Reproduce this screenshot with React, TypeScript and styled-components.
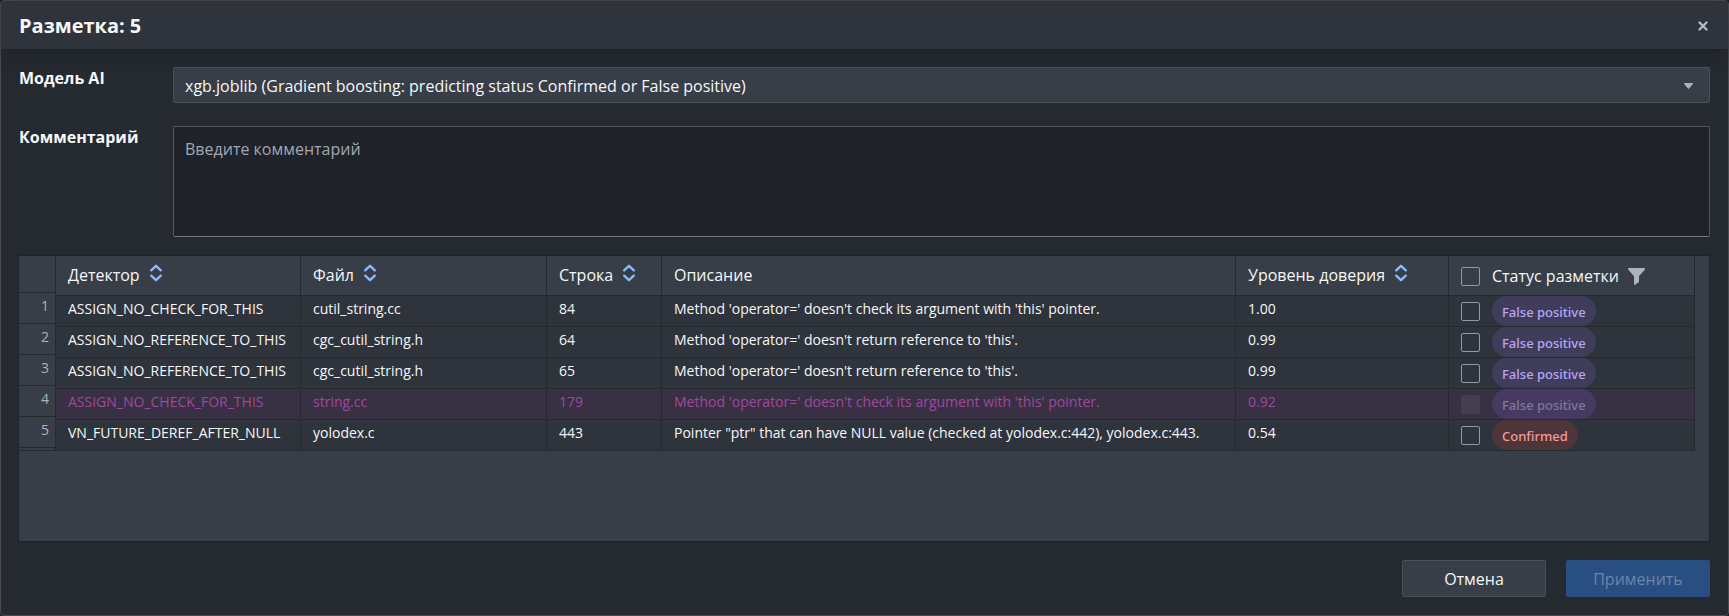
import React from "react";
import styled, { createGlobalStyle } from "styled-components";

const GlobalStyle = createGlobalStyle`
  *, *::before, *::after { box-sizing: border-box; }
  body {
    margin: 0;
    background: #1a1c22;
    color: #f6f7f9;
    font-family: "Open Sans", "Noto Sans", sans-serif;
    font-size: 16px;
    line-height: 20px;
  }
  button, select, textarea, input { font: inherit; color: inherit; margin: 0; }
`;

const Dialog = styled.main`
  display: flex;
  flex-direction: column;
  min-height: 100vh;
  background: #252a31;
  border: 1px solid #484b50;
  border-radius: 4px;
`;

const Header = styled.header`
  display: flex;
  align-items: center;
  justify-content: space-between;
  height: 48px;
  padding: 2px 17px 0 18px;
  background: #2f343c;
  border-radius: 4px 4px 0 0;
  box-shadow: 0 4px 16px rgba(17, 20, 24, 0.4);
`;

const Title = styled.h1`
  margin: 0;
  font-size: 20px;
  line-height: 24px;
  font-weight: 700;
`;

const CloseButton = styled.button`
  display: flex;
  padding: 0;
  border: 0;
  background: none;
  cursor: pointer;
`;

const Body = styled.form`
  flex: 1;
  display: flex;
  flex-direction: column;
  padding: 18px 18px 18px 17px;
`;

const Fields = styled.div`
  display: flex;
  flex-direction: column;
  gap: 23px;
  margin-bottom: 18px;
`;

const Field = styled.div`
  display: flex;
`;

const Label = styled.label`
  width: 155px;
  flex: none;
  padding: 1px 0 0 1px;
  font-weight: 700;
`;

const Control = styled.div`
  position: relative;
  flex: 1;
  display: flex;
`;

const Select = styled.select`
  width: 100%;
  height: 36px;
  padding: 2px 36px 0 11px;
  appearance: none;
  background: #383e47;
  border: 1px solid #4b5059;
  border-radius: 2px;
`;

const Caret = styled.svg`
  position: absolute;
  right: 17px;
  top: 16px;
  pointer-events: none;
`;

const TextArea = styled.textarea`
  width: 100%;
  height: 111px;
  padding: 12px 11px;
  resize: none;
  background: #1f2229;
  border: 1px solid #54565b;
  border-bottom-color: #76787c;
  border-radius: 2px;
  &::placeholder { color: #a2a8b3; opacity: 1; }
`;

const Panel = styled.div`
  flex: 1;
  display: flex;
  align-items: flex-start;
  min-height: 287px;
  padding-right: 14px;
  background: #383e47;
  border: 1px solid #1f2329;
`;

const Numbers = styled.ol`
  flex: none;
  width: 37px;
  height: 195px;
  margin: 0;
  padding: 36px 0 0;
  list-style: none;
  border: solid #252a31;
  border-width: 0 1px 1px 0;
`;

const NumberItem = styled.li`
  height: 31px;
  padding: 3px 6px 0 0;
  border-top: 1px solid #252a31;
  text-align: right;
  font-size: 14px;
  color: #abb3bf;
  &:last-child { height: 32px; border-bottom: 1px solid #252a31; }
`;

const Table = styled.table`
  flex: 1;
  table-layout: fixed;
  border-collapse: separate;
  border-spacing: 0;
`;

const Col = styled.col<{ $w?: number }>`
  width: ${(p) => (p.$w ? `${p.$w}px` : "auto")};
`;

const Th = styled.th`
  height: 40px;
  padding: 0 12px 2px;
  text-align: left;
  font-weight: 400;
  border: solid #252a31;
  border-width: 0 1px 1px 0;
`;

const StatusTh = styled(Th)`
  padding: 1px 12px 0;
`;

const Head = styled.div`
  display: flex;
  align-items: center;
  gap: 9px;
`;

const HeadLabel = styled.label`
  display: flex;
  align-items: center;
  gap: 12px;
`;

const SortButton = styled.button`
  display: flex;
  padding: 0 0 4px;
  border: 0;
  background: none;
  cursor: pointer;
`;

const Row = styled.tr<{ $muted?: boolean }>`
  background: ${(p) => (p.$muted ? "#383043" : "#2f343c")};
  color: ${(p) => (p.$muted ? "#a0489f" : "#f6f7f9")};
`;

const Td = styled.td`
  height: 31px;
  padding: 0 12px 5px;
  font-size: 14px;
  white-space: nowrap;
  overflow: hidden;
  border: solid #252a31;
  border-width: 0 1px 1px 0;
`;

const StatusTd = styled(Td)`
  padding: 0 12px;
`;

const Status = styled.label`
  display: flex;
  align-items: center;
  gap: 12px;
  height: 30px;
`;

const Checkbox = styled.input`
  appearance: none;
  flex: none;
  width: 19px;
  height: 19px;
  border: 1px solid #8f99a8;
  border-radius: 2px;
  &:disabled { background: #443f50; border-color: #443f50; }
`;

const Tag = styled.span<{ $kind: "fp" | "ok"; $muted?: boolean }>`
  height: 30px;
  padding: 0 10px;
  border-radius: 15px;
  font-family: "Noto Sans", sans-serif;
  font-size: 13px;
  font-weight: 500;
  line-height: 33px;
  background: ${(p) => (p.$kind === "ok" ? "#4e353a" : p.$muted ? "#463a63" : "#403d5b")};
  color: ${(p) => (p.$kind === "ok" ? "#f39a9a" : p.$muted ? "#807896" : "#b8a6f8")};
`;

const Footer = styled.footer`
  display: flex;
  justify-content: flex-end;
  gap: 20px;
  margin-top: 18px;
`;

const Button = styled.button<{ $primary?: boolean }>`
  width: 144px;
  height: 37px;
  border: 1px solid ${(p) => (p.$primary ? "#294f82" : "#4b5059")};
  border-radius: 2px;
  background: ${(p) => (p.$primary ? "#294f82" : "#383e47")};
  color: ${(p) => (p.$primary ? "#6985ab" : "#f6f7f9")};
`;

function Sort({ name }: { name: string }) {
  return (
    <SortButton type="button" aria-label={`Сортировать: ${name}`}>
      <svg width="14" height="18" viewBox="0 0 14 18" fill="none" stroke="#8abbff" strokeWidth="2.3" strokeLinecap="round" strokeLinejoin="round">
        <path d="M2.2 6.4 7 1.8l4.8 4.6M2.2 11.6 7 16.2l4.8-4.6" />
      </svg>
    </SortButton>
  );
}

type Item = { detector: string; file: string; line: number; text: string; trust: string; kind: "fp" | "ok"; muted?: boolean };

const items: Item[] = [
  { detector: "ASSIGN_NO_CHECK_FOR_THIS", file: "cutil_string.cc", line: 84, text: "Method 'operator=' doesn't check its argument with 'this' pointer.", trust: "1.00", kind: "fp" },
  { detector: "ASSIGN_NO_REFERENCE_TO_THIS", file: "cgc_cutil_string.h", line: 64, text: "Method 'operator=' doesn't return reference to 'this'.", trust: "0.99", kind: "fp" },
  { detector: "ASSIGN_NO_REFERENCE_TO_THIS", file: "cgc_cutil_string.h", line: 65, text: "Method 'operator=' doesn't return reference to 'this'.", trust: "0.99", kind: "fp" },
  { detector: "ASSIGN_NO_CHECK_FOR_THIS", file: "string.cc", line: 179, text: "Method 'operator=' doesn't check its argument with 'this' pointer.", trust: "0.92", kind: "fp", muted: true },
  { detector: "VN_FUTURE_DEREF_AFTER_NULL", file: "yolodex.c", line: 443, text: "Pointer \"ptr\" that can have NULL value (checked at yolodex.c:442), yolodex.c:443.", trust: "0.54", kind: "ok" },
];

const columns = [
  { name: "Детектор", width: 245, sort: true },
  { name: "Файл", width: 246, sort: true },
  { name: "Строка", width: 115, sort: true },
  { name: "Описание", sort: false },
  { name: "Уровень доверия", width: 213, sort: true },
];

export default function App() {
  return (
    <>
      <GlobalStyle />
      <Dialog>
        <Header>
          <Title>Разметка: 5</Title>
          <CloseButton type="button" aria-label="Закрыть">
            <svg width="16" height="16" viewBox="0 0 16 16" stroke="#b3bac5" strokeWidth="2.4" strokeLinecap="round">
              <path d="M4.5 4.5l7 7M11.5 4.5l-7 7" />
            </svg>
          </CloseButton>
        </Header>
        <Body>
          <Fields>
            <Field>
              <Label htmlFor="model">Модель AI</Label>
              <Control>
                <Select id="model">
                  <option>xgb.joblib (Gradient boosting: predicting status Confirmed or False positive)</option>
                </Select>
                <Caret width="9" height="6" viewBox="0 0 9 6" fill="#abb3bf">
                  <path d="M.6 0h7.8c.6 0 .8.5.4.9L5.1 5.5c-.3.4-.9.4-1.2 0L.2.9C-.2.5 0 0 .6 0z" />
                </Caret>
              </Control>
            </Field>
            <Field>
              <Label htmlFor="comment">Комментарий</Label>
              <Control>
                <TextArea id="comment" placeholder="Введите комментарий" />
              </Control>
            </Field>
          </Fields>
          <Panel>
            <Numbers>
              {items.map((_, i) => (
                <NumberItem key={i}>{i + 1}</NumberItem>
              ))}
            </Numbers>
            <Table>
              <colgroup>
                {columns.map((c) => (
                  <Col key={c.name} $w={c.width} />
                ))}
                <Col $w={246} />
              </colgroup>
              <thead>
                <tr>
                  {columns.map((c) => (
                    <Th key={c.name}>
                      <Head>
                        {c.name}
                        {c.sort && <Sort name={c.name} />}
                      </Head>
                    </Th>
                  ))}
                  <StatusTh>
                    <Head>
                      <HeadLabel>
                        <Checkbox type="checkbox" />
                        Статус разметки
                      </HeadLabel>
                      <svg width="17" height="17" viewBox="0 0 17 17" fill="#abb3bf">
                        <path d="M1.1 0h14.8c1 0 1.4 1 .8 1.7L11 8.2v5.9l-3.8 2.7c-.5.3-1.2 0-1.2-.6v-8L.3 1.7C-.3 1 .1 0 1.1 0z" />
                      </svg>
                    </Head>
                  </StatusTh>
                </tr>
              </thead>
              <tbody>
                {items.map((r, i) => (
                  <Row key={i} $muted={r.muted}>
                    <Td>{r.detector}</Td>
                    <Td>{r.file}</Td>
                    <Td>{r.line}</Td>
                    <Td>{r.text}</Td>
                    <Td>{r.trust}</Td>
                    <StatusTd>
                      <Status>
                        <Checkbox type="checkbox" disabled={r.muted} />
                        <Tag $kind={r.kind} $muted={r.muted}>{r.kind === "ok" ? "Confirmed" : "False positive"}</Tag>
                      </Status>
                    </StatusTd>
                  </Row>
                ))}
              </tbody>
            </Table>
          </Panel>
          <Footer>
            <Button type="button">Отмена</Button>
            <Button type="submit" $primary disabled>Применить</Button>
          </Footer>
        </Body>
      </Dialog>
    </>
  );
}
